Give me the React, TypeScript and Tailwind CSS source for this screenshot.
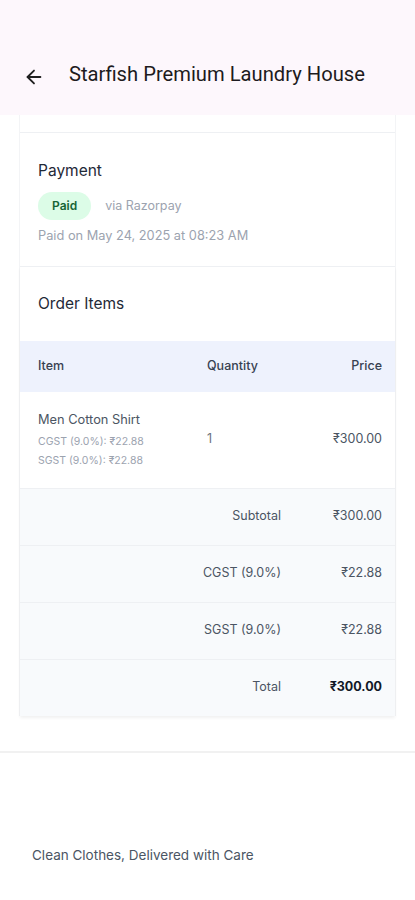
import { ArrowLeft } from "lucide-react";

const taxes = [
  { label: "CGST (9.0%)", amount: "₹22.88" },
  { label: "SGST (9.0%)", amount: "₹22.88" },
];

function TotalRow({ label, value, bold }: { label: string; value: string; bold?: boolean }) {
  return (
    <div className="flex h-[57px] items-center border-t border-[#eef0f3] bg-[#f8fafc] pr-[13px] text-[12.5px]">
      <span className="flex-1 text-right text-[#4b5563]">{label}</span>
      <span
        className={
          bold
            ? "w-[101px] text-right font-bold text-[#111827]"
            : "w-[101px] text-right text-[#4b5563]"
        }
      >
        {value}
      </span>
    </div>
  );
}

export default function App() {
  return (
    <div className="min-h-[900px] bg-white font-['Inter',sans-serif] text-[#1f2937]">
      <header className="flex h-[115px] items-end bg-[#fdf7fc] pb-[26px]">
        <button className="ml-[22px] flex h-6 w-6 items-center justify-center text-[#1f1f1f]">
          <ArrowLeft size={22} strokeWidth={2} />
        </button>
        <h1 className="ml-[23px] font-['Roboto',sans-serif] text-[20.2px] text-[#1d1b20]">
          Starfish Premium Laundry House
        </h1>
      </header>

      <div className="mx-[19px] border-x border-[#f3f4f6]">
        <div className="h-[18px] border-b border-[#eef0f3] bg-white" />

        <section className="border-b border-[#eef0f3] bg-white px-[18px] pb-[21px] pt-[26px]">
          <h2 className="text-[15.5px] text-[#1f2937]">Payment</h2>
          <div className="mt-[10px] flex items-center">
            <span className="rounded-full bg-[#dcfce7] px-[14px] py-[5px] text-[12px] font-semibold text-[#166534]">
              Paid
            </span>
            <span className="ml-[14px] text-[12.5px] text-[#9ca3af]">via Razorpay</span>
          </div>
          <p className="mt-[6px] text-[12.8px] text-[#9ca3af]">
            Paid on May 24, 2025 at 08:23 AM
          </p>
        </section>

        <section className="bg-white shadow-[0_2px_3px_rgba(0,0,0,0.06)]">
          <h2 className="px-[18px] pb-[25px] pt-[25px] text-[15.5px] text-[#1f2937]">
            Order Items
          </h2>
          <div className="flex h-[51px] items-center bg-[#eef2fd] pl-[18px] pr-[13px] text-[12.5px] font-medium text-[#374151]">
            <span className="flex-1">Item</span>
            <span className="w-[100px]">Quantity</span>
            <span className="w-[75px] text-right">Price</span>
          </div>
          <div className="flex h-[96px] items-center pl-[18px] pr-[13px]">
            <div className="flex-1">
              <p className="text-[12.8px] text-[#4b5563]">Men Cotton Shirt</p>
              {taxes.map((t) => (
                <p key={t.label} className="mt-[4px] text-[10.5px] text-[#9ca3af]">
                  {t.label}: {t.amount}
                </p>
              ))}
            </div>
            <span className="w-[100px] text-[12.5px] text-[#6b7280]">1</span>
            <span className="w-[75px] text-right text-[12.5px] text-[#4b5563]">₹300.00</span>
          </div>
          <TotalRow label="Subtotal" value="₹300.00" />
          {taxes.map((t) => (
            <TotalRow key={t.label} label={t.label} value={t.amount} />
          ))}
          <TotalRow label="Total" value="₹300.00" bold />
        </section>
      </div>

      <div className="mt-[35px] border-t-2 border-[#f1f1f1]" />
      <p className="ml-[32px] mt-[92px] text-[13.5px] text-[#4b5563]">
        Clean Clothes, Delivered with Care
      </p>
    </div>
  );
}
